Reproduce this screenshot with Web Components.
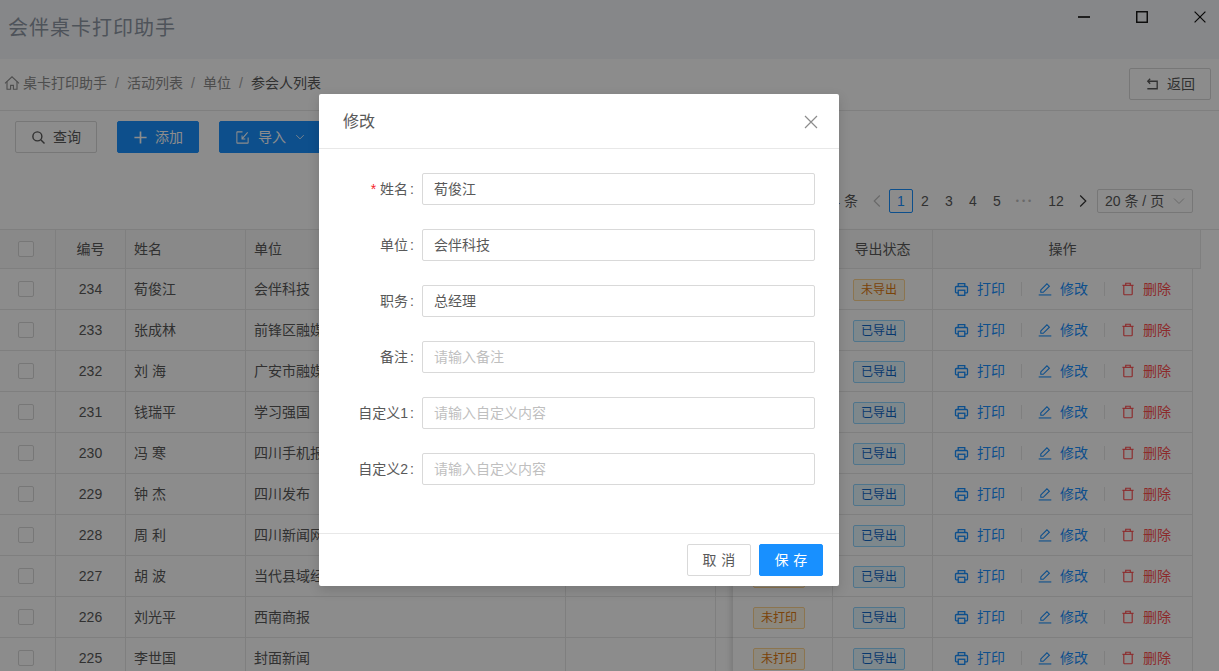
<!DOCTYPE html>
<html lang="zh-CN">
<head>
<meta charset="utf-8">
<title>会伴桌卡打印助手</title>
<style>
html,body{margin:0;height:100%;overflow:hidden;background:#fff}
body{font:14px/22px "Liberation Sans","Noto Sans CJK SC",sans-serif;color:#595959}
</style>
</head>
<body>
<app-shell></app-shell>
<script>
const ICONS={
 home:'<path d="M1 8.4 8 1.8l7 6.6"/><path d="M3 6.6V14.2h3.6v-3.8h2.8v3.8H13V6.6"/>',
 search:'<circle cx="6.8" cy="6.8" r="4.8"/><path d="m10.4 10.4 4 4"/>',
 plus:'<path d="M8 1.5v13M1.5 8h13"/>',
 import:'<path d="M14 8v5.5a.5.5 0 0 1-.5.5h-11a.5.5 0 0 1-.5-.5v-11a.5.5 0 0 1 .5-.5H8"/><path d="M7.5 9.5 13.5 2.5M7.5 5.8v3.7H11"/>',
 down:'<path d="m3 5.5 5 5 5-5"/>',
 left:'<path d="M10.8 2.5 5.2 8l5.6 5.5"/>',
 right:'<path d="M5.2 2.5 10.8 8l-5.6 5.5"/>',
 back:'<path d="M3 4.5h10v8H2.5"/><path d="M5.5 1.8 3 4.5l2.5 2.7"/>',
 close:'<path d="m2 2 12 12M14 2 2 14"/>',
 wclose:'<path d="m.8.8 14.4 14.4M15.2.8.8 15.2"/>',
 max:'<rect x="1" y="1" width="14" height="14"/>',
 min:'<path d="M0 8h16"/>',
 print:'<path d="M4.5 4.8V1.8h7v3"/><path d="M4.5 11.6H2.6a1 1 0 0 1-1-1V5.8a1 1 0 0 1 1-1h10.8a1 1 0 0 1 1 1v4.8a1 1 0 0 1-1 1h-1.9"/><rect x="4.5" y="8.8" width="7" height="5.4"/>',
 edit:'<path d="M.8 14.8h14.4"/><path d="M3.2 11.8V9L10.2 2l2.8 2.8-7 7z"/>',
 del:'<path d="M1.6 3.8h12.8"/><path d="M3.2 3.8v9.8a1 1 0 0 0 1 1h7.6a1 1 0 0 0 1-1V3.8"/><path d="M5.4 3.6V1.4h5.2v2.2"/>'
};
class XIcon extends HTMLElement{
  connectedCallback(){
    const n=this.getAttribute('name'),s=this.getAttribute('size')||14,w=this.getAttribute('sw')||1.2;
    this.attachShadow({mode:'open'}).innerHTML=`<style>:host{display:inline-flex;flex:none;line-height:0}svg{display:block}</style>
    <svg width="${s}" height="${s}" viewBox="0 0 16 16" fill="none" stroke="currentColor" stroke-width="${w}">${ICONS[n]}</svg>`;
  }
}
customElements.define('x-icon',XIcon);

class XButton extends HTMLElement{
  constructor(){super();this.attachShadow({mode:'open'}).innerHTML=`<style>
  :host{display:inline-flex;align-items:center;justify-content:center;height:32px;box-sizing:border-box;border:1px solid #d9d9d9;border-radius:2px;background:#fff;color:#595959;font-size:14px;width:82px;gap:7px}
  :host([primary]){background:#1890ff;border-color:#1890ff;color:#fff}
  </style><slot></slot>`}
}
customElements.define('x-button',XButton);

class AppTitlebar extends HTMLElement{
  constructor(){super();this.attachShadow({mode:'open'}).innerHTML=`<style>
  :host{display:flex;justify-content:space-between;height:59px;background:#f5f6f9;box-sizing:border-box;padding:0 13px 0 8px}
  h1{margin:0;font-size:20px;font-weight:400;letter-spacing:1px;color:#8f98a5;line-height:56px}
  .ctl{display:flex;gap:46px;padding-top:11px;height:12px;color:#111}
  </style><h1>会伴桌卡打印助手</h1>
  <div class="ctl"><x-icon name="min" size="12" sw="2.2"></x-icon><x-icon name="max" size="12" sw="1.9"></x-icon><x-icon name="wclose" size="12" sw="1.6"></x-icon></div>`}
}
customElements.define('app-titlebar',AppTitlebar);

class AppBreadcrumb extends HTMLElement{
  constructor(){super();this.attachShadow({mode:'open'}).innerHTML=`<style>
  :host{display:flex;align-items:center;justify-content:space-between;height:52px;box-sizing:border-box;border-bottom:1px solid #e8e8e8;padding:0 8px 2px 4px;color:#8c8c8c}
  nav{display:flex;align-items:center;padding-bottom:2px}
  i{font-style:normal;margin:0 8px;width:4px;text-align:center;color:#a6a6a6}
  b{font-weight:400;color:#595959}
  nav x-icon{margin-right:3px}
  x-button{margin-top:1px;color:#595959;justify-content:flex-start;padding-left:15px}
  </style><nav><x-icon name="home" size="16" sw="1.1"></x-icon><span>桌卡打印助手</span><i>/</i><span>活动列表</span><i>/</i><span>单位</span><i>/</i><b>参会人列表</b></nav>
  <x-button><x-icon name="back" size="15" sw="1.4"></x-icon><span>返回</span></x-button>`}
}
customElements.define('app-breadcrumb',AppBreadcrumb);

class AppPager extends HTMLElement{
  constructor(){super();this.attachShadow({mode:'open'}).innerHTML=`<style>
  :host{display:flex;justify-content:flex-end;align-items:center;height:24px;padding-right:26px;color:#595959}
  span,x-icon{display:flex;align-items:center;justify-content:center;height:24px}
  .i{width:24px;box-sizing:border-box}
  .cur{border:1px solid #1890ff;border-radius:2px;color:#1890ff}
  .jump{width:32px;color:#bfbfbf;font-size:9px;letter-spacing:3px}
  .w{width:30px}
  .nav{width:24px;color:#333}
  .prev{color:#bfbfbf}
  .sel{width:96px;box-sizing:border-box;border:1px solid #d9d9d9;border-radius:2px;margin-left:2px;justify-content:space-between;padding:0 5px 0 7px;white-space:pre}
  .sel x-icon{color:#bfbfbf}
  .tot{margin-right:7px}
  </style>
  <span class="tot">共 234 条</span><x-icon class="nav prev" name="left" size="16" sw="1.1"></x-icon>
  <span class="i cur">1</span><span class="i">2</span><span class="i">3</span><span class="i">4</span><span class="i">5</span>
  <span class="jump">•••</span><span class="w">12</span><x-icon class="nav" name="right" size="16" sw="1.2"></x-icon>
  <span class="sel">20 条 / 页<x-icon name="down" size="16" sw="1"></x-icon></span>`}
}
customElements.define('app-pager',AppPager);

class AppToolbar extends HTMLElement{
  constructor(){super();this.attachShadow({mode:'open'}).innerHTML=`<style>
  :host{display:block;padding:10px 0 16px}
  .btns{display:flex;gap:20px;padding-left:15px;margin-bottom:36px}
  .imp{width:112px;justify-content:flex-start;padding-left:15px;gap:8px}
  </style><div class="btns">
   <x-button><x-icon name="search" size="15" sw="1.5"></x-icon><span>查询</span></x-button>
   <x-button primary><x-icon name="plus" size="15" sw="1.8"></x-icon><span>添加</span></x-button>
   <x-button primary class="imp"><x-icon name="import" size="15" sw="1.1"></x-icon><span>导入</span><x-icon name="down" size="12" sw="1.1"></x-icon></x-button>
  </div><app-pager></app-pager>`}
}
customElements.define('app-toolbar',AppToolbar);

class XTag extends HTMLElement{
  constructor(){super();this.attachShadow({mode:'open'}).innerHTML=`<style>
  :host{display:inline-block;box-sizing:border-box;width:52px;height:22px;margin-top:2px;line-height:20px;text-align:center;font-size:12px;border:1px solid #91d5ff;background:#e6f7ff;color:#1066c8;border-radius:2px}
  :host([warn]){border-color:#ffd591;background:#fff7e6;color:#e07a10}
  </style><slot></slot>`}
}
customElements.define('x-tag',XTag);

const ROWS=[
 [234,'荀俊江','会伴科技','未打印','未导出'],[233,'张成林','前锋区融媒体中心','未打印','已导出'],
 [232,'刘 海','广安市融媒体中心','未打印','已导出'],[231,'钱瑞平','学习强国','未打印','已导出'],
 [230,'冯 寒','四川手机报','未打印','已导出'],[229,'钟 杰','四川发布','未打印','已导出'],
 [228,'周 利','四川新闻网','未打印','已导出'],[227,'胡 波','当代县域经济','未打印','已导出'],
 [226,'刘光平','西南商报','未打印','已导出'],[225,'李世国','封面新闻','未打印','已导出']];

class DataTable extends HTMLElement{
  constructor(){super();
    const tag=t=>`<x-tag ${t[0]==='未'?'warn':''}>${t}</x-tag>`;
    const left=`<div class="row head"><div class="c c0"><u></u></div><div class="c c1 ct">编号</div><div class="c c2">姓名</div><div class="c c3">单位</div><div class="c c4"></div><div class="c c5"></div></div>`+
      ROWS.map(r=>`<div class="row"><div class="c c0"><u></u></div><div class="c c1 ct">${r[0]}</div><div class="c c2">${r[1]}</div><div class="c c3">${r[2]}</div><div class="c c4"></div><div class="c c5"></div></div>`).join('');
    const right=`<div class="row head rh"><div class="c r1 ct">打印状态</div><div class="c r2 ct">导出状态</div><div class="c r3 ct">操作</div></div>`+
      ROWS.map(r=>`<div class="row rb"><div class="c r1 tg">${tag(r[3])}</div><div class="c r2 tg">${tag(r[4])}</div><div class="c r3 acts">
      <a class="pr"><x-icon name="print" size="15" sw="1.4"></x-icon>打印</a><s></s><a><x-icon name="edit" size="14" sw="1.25"></x-icon>修改</a><s></s><a class="dl"><x-icon name="del" size="14" sw="1.3"></x-icon>删除</a></div></div>`).join('');
    this.attachShadow({mode:'open'}).innerHTML=`<style>
    :host{display:flex;align-items:flex-start;color:#595959;border-top:1px solid #e8e8e8}
    .main{flex:none;width:733px;overflow:hidden}
    .fixed{flex:none;width:468px;box-shadow:-6px 0 6px -4px rgba(0,0,0,.15);background:#fff}
    .row{display:flex;height:41px;box-sizing:border-box;border-bottom:1px solid #e8e8e8}
    .head{height:39px;background:#fafafa}
    .c{box-sizing:border-box;flex:none;display:flex;align-items:center;padding:0 8px;border-right:1px solid #e8e8e8;white-space:nowrap;overflow:hidden}
    .ct{justify-content:center}
    .tg{padding-left:20px}
    .c0{width:56px;padding:0 0 0 18px}.c1{width:70px}.c2{width:120px}.c3{width:320px}.c4{width:150px}.c5{width:17px;border-right:0}
    u{display:block;width:16px;height:16px;box-sizing:border-box;border:1px solid #d9d9d9;border-radius:2px;background:#fff}
    .r1{width:100px}.r2{width:100px}.r3{width:268px;}
    .rb{width:460px;border-right:1px solid #e8e8e8}
    .rb .r3{width:259px;border-right:0}
    .rh .r3{border-right:1px solid #e8e8e8;padding-right:16px}
    .acts{padding:0 0 0 21px;color:#1890ff}
    a{display:flex;align-items:center;gap:8px;width:50px}
    .pr{width:51px}
    .dl{color:#ff4d4f}
    s{display:block;width:1px;height:14px;background:#e8e8e8;margin:0 16px}
    </style><div class="main">${left}</div><div class="fixed">${right}</div>`;
  }
}
customElements.define('data-table',DataTable);

class FormRow extends HTMLElement{
  constructor(){super();
    const l=this.getAttribute('label'),v=this.getAttribute('value'),p=this.getAttribute('ph'),req=this.hasAttribute('req');
    this.attachShadow({mode:'open'}).innerHTML=`<style>
    :host{display:flex;align-items:center;height:32px;margin-bottom:24px}
    label{width:72px;display:flex;justify-content:flex-end;margin-right:7px;color:#595959;white-space:nowrap}
    em{font-style:normal;color:#f5222d;font-family:"Liberation Sans",sans-serif;margin-right:4px}
    i{font-style:normal;margin:0 1px 0 2px}
    .in{width:393px;height:32px;box-sizing:border-box;border:1px solid #d9d9d9;border-radius:2px;padding:0 11px;line-height:30px;color:#595959;font-size:14px}
    .ph{color:#bfbfbf}
    </style><label>${req?'<em>*</em>':''}${l}<i>:</i></label><div class="in ${v?'':'ph'}">${v||p}</div>`;
  }
}
customElements.define('form-row',FormRow);

class EditModal extends HTMLElement{
  constructor(){super();this.attachShadow({mode:'open'}).innerHTML=`<style>
  :host{display:block;width:520px;height:492px;background:#fff;border-radius:2px;box-shadow:0 4px 12px rgba(0,0,0,.15);box-sizing:border-box;color:#595959}
  header{display:flex;align-items:center;justify-content:space-between;height:55px;box-sizing:border-box;border-bottom:1px solid #e8e8e8;padding:2px 20px 0 24px;font-size:16px}
  header x-icon{color:#8c8c8c}
  .body{padding:24px;height:384px;box-sizing:border-box}
  footer{display:flex;justify-content:flex-end;gap:8px;height:53px;box-sizing:border-box;border-top:1px solid #e8e8e8;padding:10px 16px}
  x-button{width:64px}
  footer span{letter-spacing:.34em;margin-right:-.34em}
  </style>
  <header><span>修改</span><x-icon name="close" size="16" sw="1.2"></x-icon></header>
  <div class="body">
   <form-row label="姓名" value="荀俊江" req></form-row>
   <form-row label="单位" value="会伴科技"></form-row>
   <form-row label="职务" value="总经理"></form-row>
   <form-row label="备注" ph="请输入备注"></form-row>
   <form-row label="自定义1" ph="请输入自定义内容"></form-row>
   <form-row label="自定义2" ph="请输入自定义内容"></form-row>
  </div>
  <footer><x-button><span>取消</span></x-button><x-button primary><span>保存</span></x-button></footer>`}
}
customElements.define('edit-modal',EditModal);

class AppShell extends HTMLElement{
  constructor(){super();this.attachShadow({mode:'open'}).innerHTML=`<style>
  :host{display:block;height:100vh;overflow:hidden;position:relative}
  .mask{position:absolute;inset:0;background:rgba(0,0,0,.45);padding:94px 0 0 319px;box-sizing:border-box}
  </style>
  <app-titlebar></app-titlebar><app-breadcrumb></app-breadcrumb><app-toolbar></app-toolbar><data-table></data-table>
  <div class="mask"><edit-modal></edit-modal></div>`}
}
customElements.define('app-shell',AppShell);
</script>
</body>
</html>
